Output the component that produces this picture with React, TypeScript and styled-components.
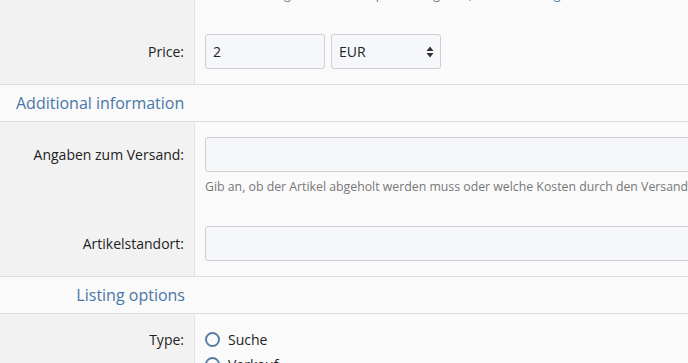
import React from 'react';
import styled, { createGlobalStyle } from 'styled-components';

const GlobalStyle = createGlobalStyle`
  html, body {
    margin: 0;
    padding: 0;
    background: #fafafa;
    font-family: "Open Sans", "Noto Sans", sans-serif;
    font-size: 14px;
    color: #222;
    overflow: hidden;
  }
`;

const Form = styled.form`
  width: 100%;
  margin-top: -12px;
`;

const Row = styled.div`
  display: grid;
  grid-template-columns: 195px 1fr;
  border-bottom: 1px solid #dcdcdc;
`;

const LabelCol = styled.div`
  background: #f2f2f2;
  border-right: 1px solid #e2e2e2;
  display: flex;
  flex-direction: column;
  padding: 0 10px;
`;

const FieldCol = styled.div`
  display: flex;
  flex-direction: column;
  padding: 0 0 0 10px;
  overflow: hidden;
`;

const Label = styled.label<{ $h: number; $mt: number }>`
  height: ${({ $h }) => $h}px;
  margin-top: ${({ $mt }) => $mt}px;
  display: flex;
  align-items: center;
  justify-content: flex-end;
  white-space: nowrap;
`;

const Spacer = styled.div<{ $h: number }>`
  height: ${({ $h }) => $h}px;
`;

const Line = styled.div<{ $mt: number }>`
  display: flex;
  gap: 6px;
  margin-top: ${({ $mt }) => $mt}px;
`;

const Input = styled.input<{ $w?: number }>`
  box-sizing: border-box;
  height: 35px;
  width: ${({ $w }) => ($w ? `${$w}px` : '560px')};
  flex: none;
  border: 1px solid #cfcfcf;
  border-radius: 3px;
  background: #f6f7fa;
  font-family: inherit;
  font-size: 14px;
  color: #222;
  padding: 0 7px;
  outline: none;
`;

const SelectBox = styled.div`
  box-sizing: border-box;
  height: 35px;
  width: 110px;
  border: 1px solid #cfcfcf;
  border-radius: 3px;
  background: #f6f7fa;
  display: flex;
  align-items: center;
  justify-content: space-between;
  padding: 0 6px 0 7px;
  font-size: 14px;
`;

const Help = styled.div<{ $mt: number }>`
  margin-top: ${({ $mt }) => $mt}px;
  font-size: 12.3px;
  color: #777;
  white-space: nowrap;
  line-height: 16px;
`;

const HelpLink = styled.span`
  color: #4a76a8;
`;

const SectionHeader = styled.div<{ $align: 'left' | 'right' }>`
  height: 36px;
  display: grid;
  grid-template-columns: 185px 1fr;
  align-items: center;
  border-bottom: 1px solid #dcdcdc;
  background: #fafafa;
  color: #4a76a8;
  font-size: 16px;
  padding-left: ${({ $align }) => ($align === 'left' ? '16px' : '0')};
  text-align: ${({ $align }) => $align};
  white-space: nowrap;
`;

const RadioLine = styled.label<{ $mt: number }>`
  display: flex;
  align-items: center;
  gap: 8px;
  margin-top: ${({ $mt }) => $mt}px;
  height: 18px;
`;

const RadioCircle = styled.span`
  box-sizing: border-box;
  width: 15px;
  height: 15px;
  border: 2px solid #5a7fa6;
  border-radius: 50%;
  background: #fafafa;
`;

const Arrows = () => (
  <svg width="8" height="12" viewBox="0 0 8 12">
    <path d="M4 0.5 L7.5 5 H0.5 Z" fill="#333" />
    <path d="M4 11.5 L7.5 7 H0.5 Z" fill="#333" />
  </svg>
);

export default function App() {
  return (
    <>
      <GlobalStyle />
      <Form>
        <Row>
          <LabelCol>
            <Label $h={35} $mt={46}>Price:</Label>
            <Spacer $h={15} />
          </LabelCol>
          <FieldCol>
            <Help $mt={-1}>
              Bei Suchanzeigen kannst du optional angeben, wie viel du <HelpLink>ungefähr</HelpLink> zahlen möchtest.
            </Help>
            <Line $mt={31}>
              <Input $w={120} defaultValue="2" />
              <SelectBox>
                <span>EUR</span>
                <Arrows />
              </SelectBox>
            </Line>
          </FieldCol>
        </Row>
        <SectionHeader $align="left">Additional information</SectionHeader>
        <Row>
          <LabelCol>
            <Label $h={35} $mt={15}>Angaben zum Versand:</Label>
            <Label $h={35} $mt={54}>Artikelstandort:</Label>
            <Spacer $h={15} />
          </LabelCol>
          <FieldCol>
            <Line $mt={15}>
              <Input />
            </Line>
            <Help $mt={7}>
              Gib an, ob der Artikel abgeholt werden muss oder welche Kosten durch den Versand entstehen.
            </Help>
            <Line $mt={31}>
              <Input />
            </Line>
          </FieldCol>
        </Row>
        <SectionHeader $align="right">
          <span>Listing options</span>
        </SectionHeader>
        <Row>
          <LabelCol>
            <Label $h={18} $mt={16}>Type:</Label>
            <Spacer $h={40} />
          </LabelCol>
          <FieldCol>
            <RadioLine $mt={16}>
              <RadioCircle />
              <span>Suche</span>
            </RadioLine>
            <RadioLine $mt={7}>
              <RadioCircle />
              <span>Verkauf</span>
            </RadioLine>
          </FieldCol>
        </Row>
      </Form>
    </>
  );
}
